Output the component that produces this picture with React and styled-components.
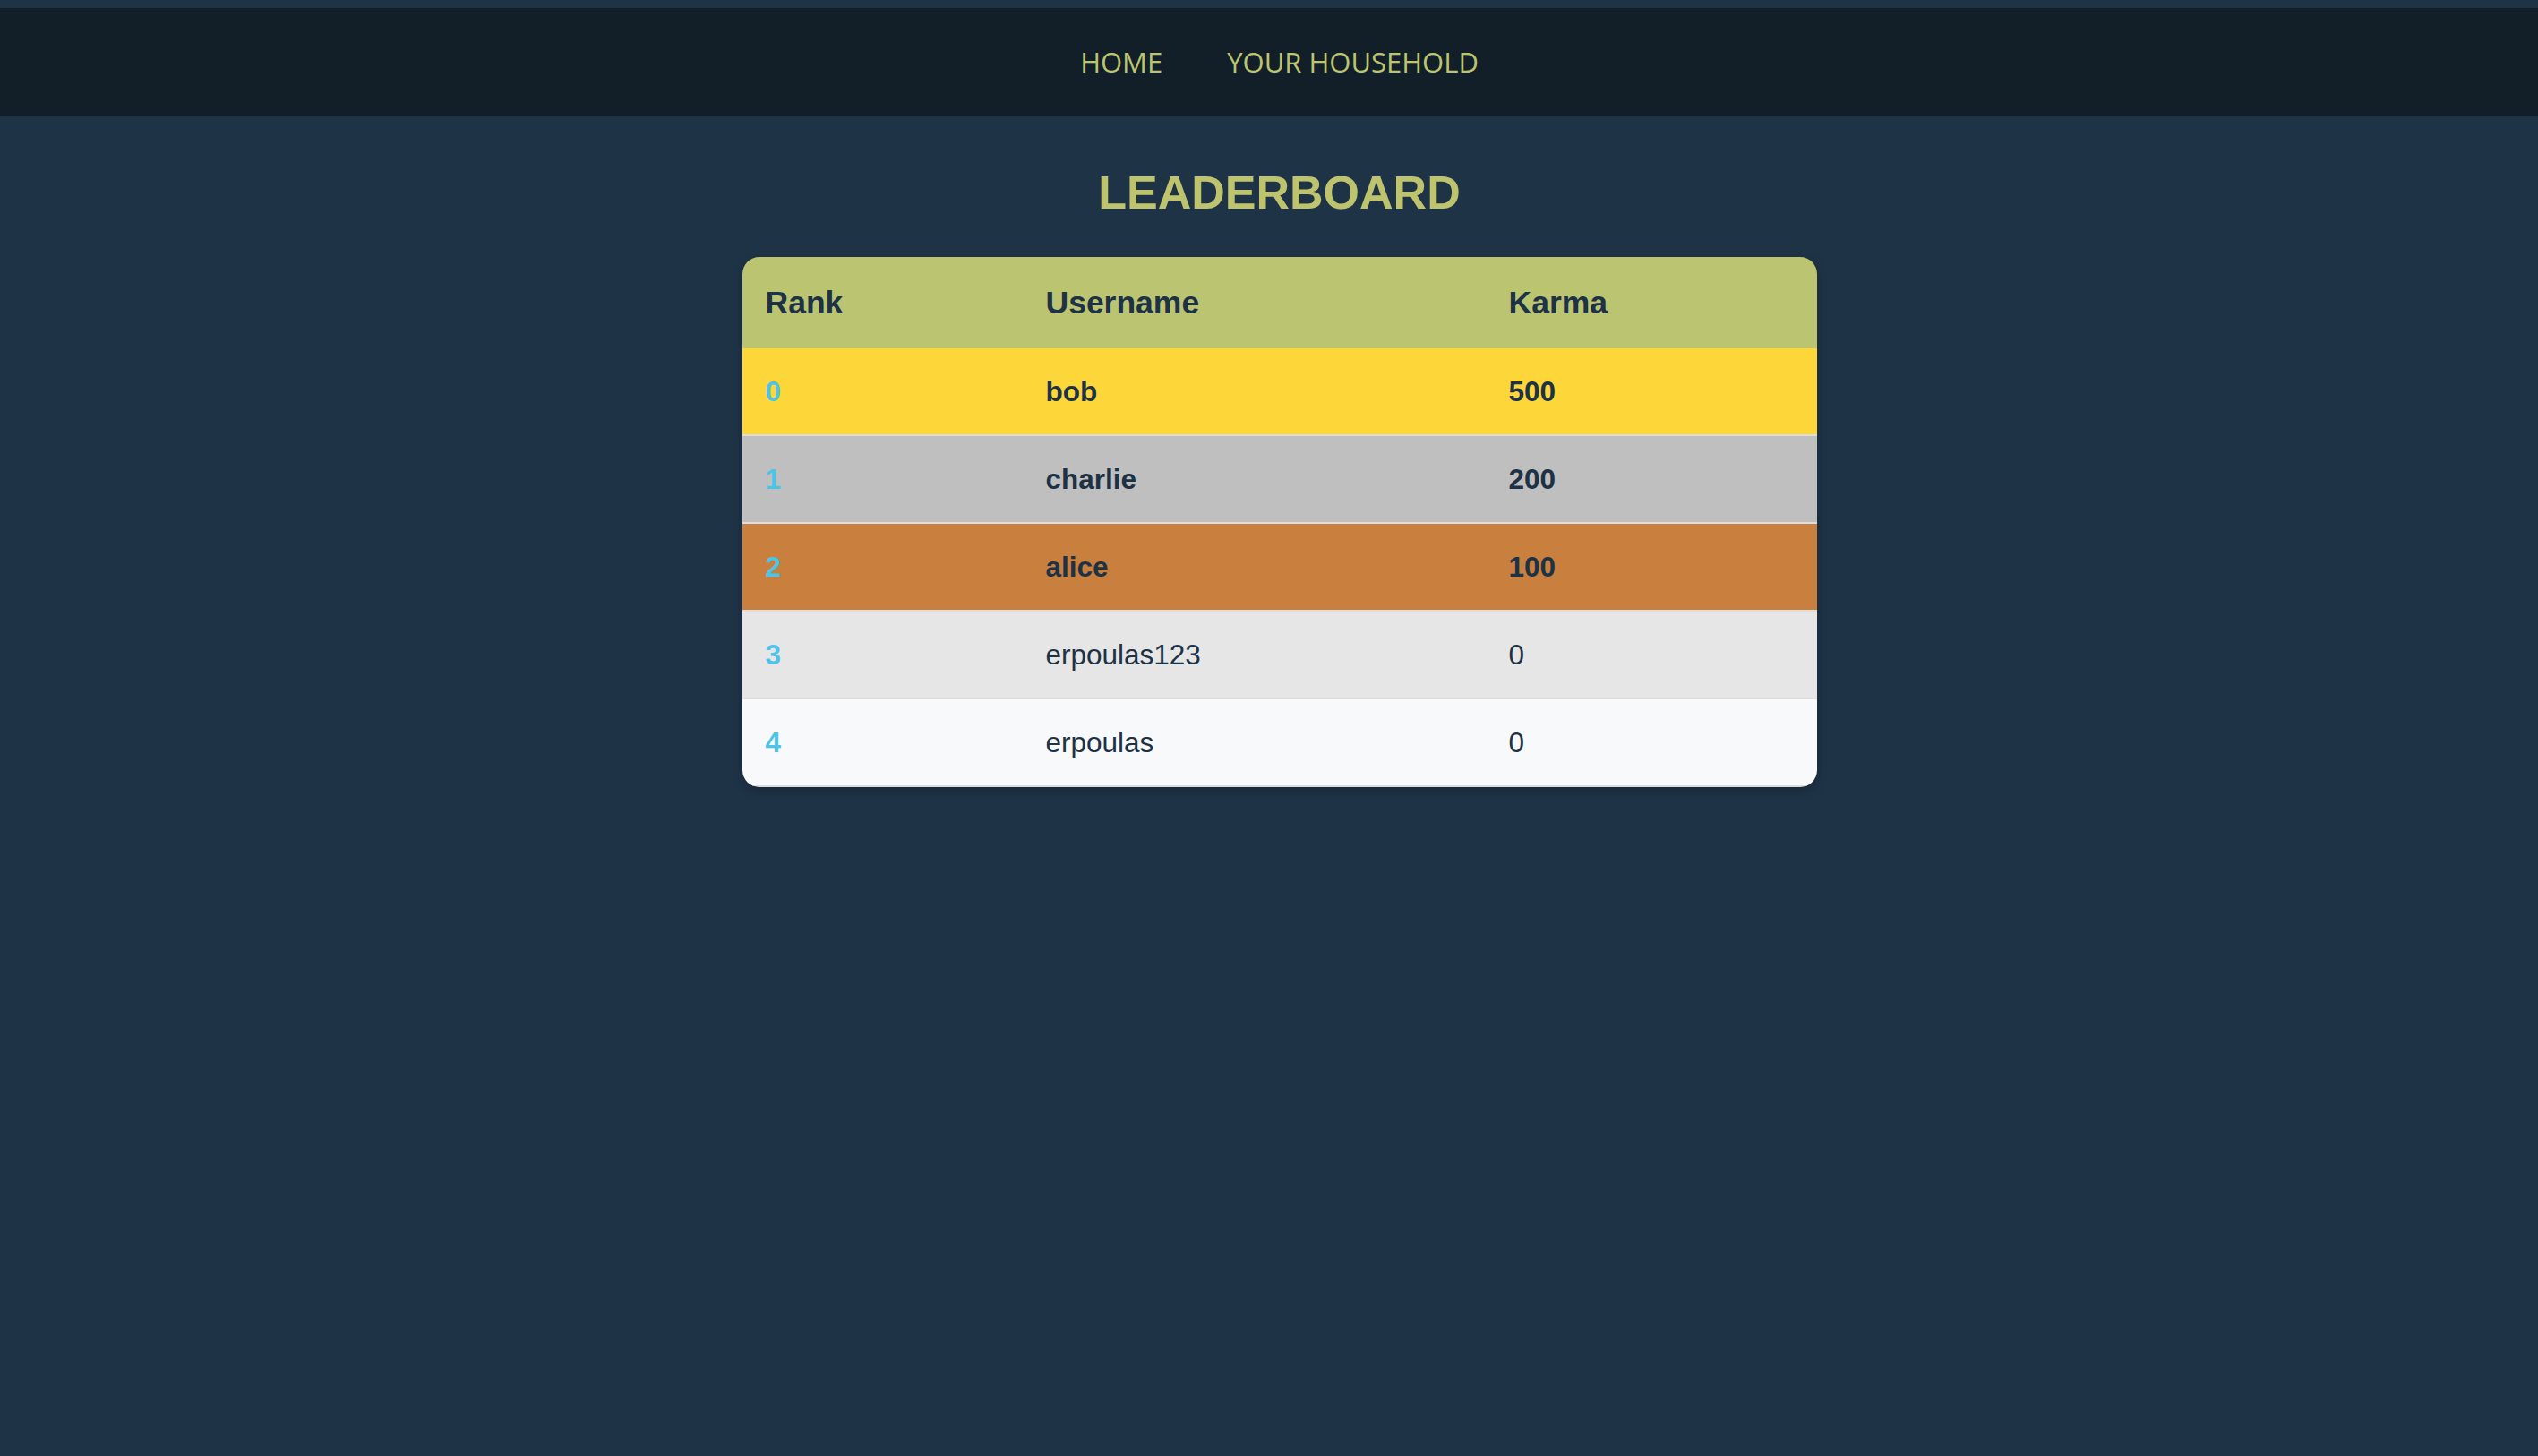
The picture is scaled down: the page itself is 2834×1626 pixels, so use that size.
import React from 'react';
import styled, { createGlobalStyle } from 'styled-components';

const GlobalStyle = createGlobalStyle`
  html, body {
    margin: 0;
    padding: 0;
    background: #1f3347;
    font-family: "Liberation Sans", Arial, sans-serif;
  }
`;

const Page = styled.div`
  min-height: 1626px;
  padding-top: 9px;
  box-sizing: border-box;
  background: #1f3347;
`;

const NavBar = styled.nav`
  height: 120px;
  background: #121f29;
  display: flex;
  align-items: center;
  justify-content: center;
  gap: 72px;
  padding-left: 23px;
`;

const NavLink = styled.a`
  font-family: "Open Sans", "Noto Sans", sans-serif;
  font-size: 31px;
  color: #bcc46e;
  text-decoration: none;
  text-transform: uppercase;
  cursor: pointer;
`;

const Main = styled.main`
  display: flex;
  flex-direction: column;
  align-items: center;
  padding-left: 23px;
`;

const Title = styled.h1`
  margin: 56px 0 42px;
  font-size: 52px;
  line-height: 60px;
  font-weight: 700;
  color: #bdc46d;
`;

const Card = styled.div`
  width: 1200px;
  border-radius: 19px;
  overflow: hidden;
  box-shadow: 0 4px 12px rgba(0, 0, 0, 0.25);
`;

const Table = styled.table`
  width: 100%;
  table-layout: fixed;
  border-collapse: collapse;
`;

const HeadCell = styled.th`
  height: 102px;
  padding: 0 0 0 26px;
  text-align: left;
  font-size: 35.5px;
  font-weight: 700;
  color: #1e3246;
  background: #bbc470;
`;

const rowBg = {
  gold: '#fdd639',
  silver: '#bfbfbf',
  bronze: '#c9803e',
  odd: '#e6e6e6',
  even: '#f7f9fa',
};

const Row = styled.tr`
  background: ${(p) => rowBg[p.$tone]};
  border-bottom: 2px solid #dddddd;
`;

const Cell = styled.td`
  height: 96px;
  padding: 0 0 0 26px;
  font-size: 31.5px;
  color: #1e3246;
  font-weight: ${(p) => (p.$bold ? 700 : 400)};
`;

const RankCell = styled(Cell)`
  color: #4fc3e6;
  font-weight: 700;
`;

const players = [
  { name: 'bob', karma: 500 },
  { name: 'charlie', karma: 200 },
  { name: 'alice', karma: 100 },
  { name: 'erpoulas123', karma: 0 },
  { name: 'erpoulas', karma: 0 },
];

const tones = ['gold', 'silver', 'bronze'];

export default function App() {
  return (
    <Page>
      <GlobalStyle />
      <NavBar>
        <NavLink>Home</NavLink>
        <NavLink>Your Household</NavLink>
      </NavBar>
      <Main>
        <Title>LEADERBOARD</Title>
        <Card>
          <Table>
            <colgroup>
              <col style={{ width: 313 }} />
              <col style={{ width: 517 }} />
              <col style={{ width: 370 }} />
            </colgroup>
            <thead>
              <tr>
                <HeadCell>Rank</HeadCell>
                <HeadCell>Username</HeadCell>
                <HeadCell>Karma</HeadCell>
              </tr>
            </thead>
            <tbody>
              {players.map((p, i) => {
                const top = i < 3;
                const tone = top ? tones[i] : i % 2 === 1 ? 'odd' : 'even';
                return (
                  <Row key={p.name} $tone={tone}>
                    <RankCell>{i}</RankCell>
                    <Cell $bold={top}>{p.name}</Cell>
                    <Cell $bold={top}>{p.karma}</Cell>
                  </Row>
                );
              })}
            </tbody>
          </Table>
        </Card>
      </Main>
    </Page>
  );
}
